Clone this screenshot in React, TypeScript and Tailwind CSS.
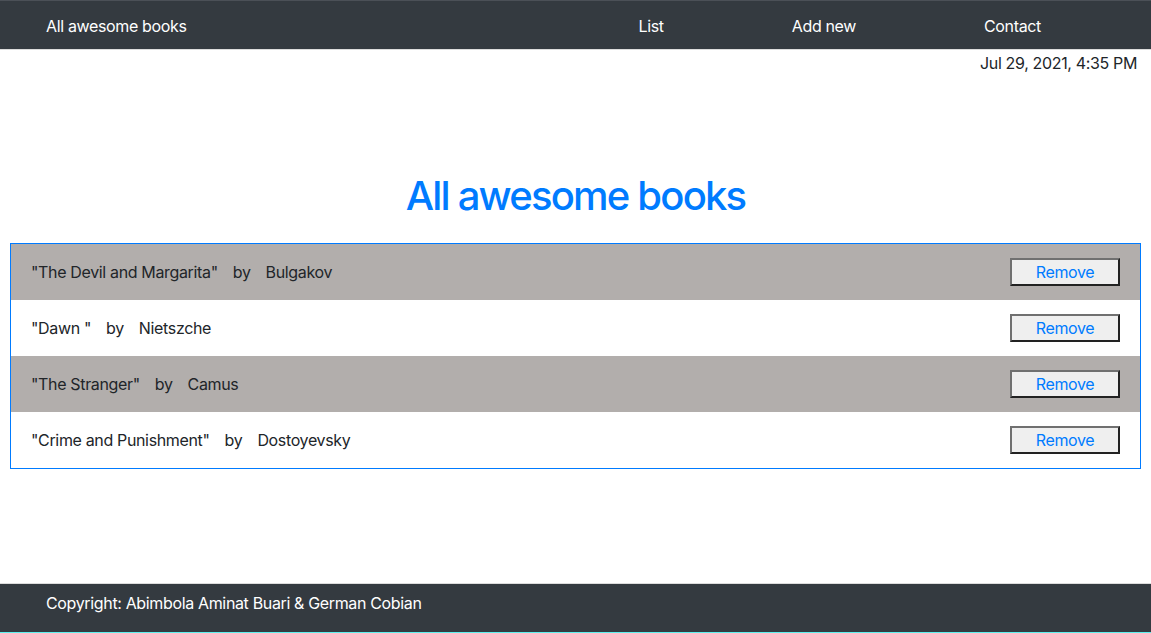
const books = [
  { title: 'The Devil and Margarita', author: 'Bulgakov' },
  { title: 'Dawn ', author: 'Nietszche' },
  { title: 'The Stranger', author: 'Camus' },
  { title: 'Crime and Punishment', author: 'Dostoyevsky' },
]

const font = { fontFamily: 'Inter, "Liberation Sans", sans-serif' }

export default function App() {
  return (
    <div className="flex min-h-[633px] flex-col bg-white tracking-[-0.35px] text-[#212529]" style={font}>
      <nav className="flex h-[50px] items-center justify-between border-t border-b border-t-[#4b5057] border-b-[#dcdcdc] bg-[#343a40] px-[46px] pt-[2px] text-white">
        <span className="text-base">All awesome books</span>
        <ul className="flex text-base">
          <li className="px-16">List</li>
          <li className="px-16">Add new</li>
          <li className="px-16">Contact</li>
        </ul>
      </nav>

      <div className="flex justify-end pr-[14px] pt-[1px] text-base">Jul 29, 2021, 4:35 PM</div>

      <h1 className="mt-[97px] text-center text-[40px] font-medium leading-[48px] tracking-[-1.8px] text-[#007bff]">
        All awesome books
      </h1>

      <ul className="mx-[10px] mt-[23px] border border-[#007bff]">
        {books.map((b, i) => (
          <li
            key={b.title}
            className={`flex h-[56px] items-center justify-between pl-5 pr-5 ${i % 2 === 0 ? 'bg-[#b2aeac]' : 'bg-white'}`}
          >
            <div className="flex gap-[15px] text-base">
              <span>"{b.title}"</span>
              <span>by</span>
              <span>{b.author}</span>
            </div>
            <button className="h-[28px] w-[110px] border-2 border-t-[#707070] border-l-[#707070] border-r-[#222] border-b-[#222] bg-[#efefef] text-base text-[#007bff]">
              Remove
            </button>
          </li>
        ))}
      </ul>

      <footer className="mt-auto flex h-[50px] items-start border-t border-b border-t-[#dcdcdc] border-b-[#5ef0ee] bg-[#343a40] px-[46px] pt-[7px] text-base text-white">
        Copyright: Abimbola Aminat Buari &amp; German Cobian
      </footer>
    </div>
  )
}
